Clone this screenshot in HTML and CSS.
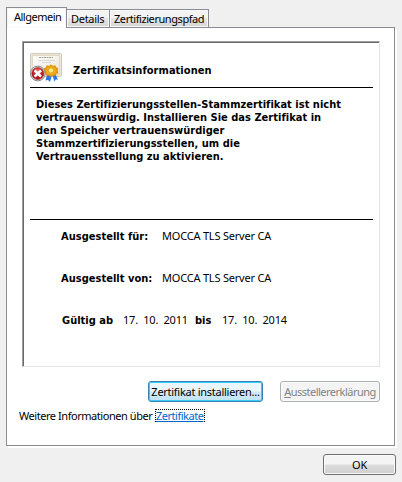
FILE: index.html
```html
<!DOCTYPE html>
<html lang="de">
<head>
<meta charset="utf-8">
<title>Zertifikat</title>
<link rel="stylesheet" href="styles.css">
</head>
<body>
<main class="dialog">
  <nav class="tabs">
    <div class="tab active">Allgemein</div>
    <div class="tab">Details</div>
    <div class="tab path">Zertifizierungspfad</div>
  </nav>
  <section class="sheet">
    <article class="certificate">
      <header class="heading">
        <svg class="cert-icon" width="33" height="30" viewBox="0 0 33 30">
          <defs>
            <linearGradient id="paper" x2="1" y2="1"><stop stop-color="#fffefa"/><stop offset="1" stop-color="#e8e5da"/></linearGradient>
            <radialGradient id="red" cy=".3"><stop stop-color="#f26b64"/><stop offset="1" stop-color="#b3171c"/></radialGradient>
            <radialGradient id="gold"><stop stop-color="#ffe36a"/><stop offset=".45" stop-color="#f5b51c"/><stop offset="1" stop-color="#dc8a08"/></radialGradient>
          </defs>
          <rect x=".5" y=".5" width="31" height="23" rx="1" fill="#ebe6d6" stroke="#d0cbbb"/>
          <rect x="2.500" y="2.500" width="27" height="19" fill="url(#paper)" stroke="#dfd9c5"/>
          <path d="M9 4.500h14" stroke="#aaa794" stroke-dasharray="2 .5"/>
          <path d="M8 7.500h17M12 9.500h9" stroke="#d5d8dd"/>
          <path d="M17.500 20l-2 7.500 2.500-.6 2 2.100 2.200-8zM22 21l2.500 7.500 1.500-2.200 2 .7-3-7z" fill="#2877e8"/>
          <path d="M21 11.500l2 1.200 2.200-.4 1 2 2 1.200-.5 2.200.5 2.200-2 1.100-1 2-2.200-.4-2 1.300-2-1.300-2.200.4-1-2-1.900-1.100.5-2.200-.5-2.200 1.900-1.200 1-2 2.200.4z" fill="url(#gold)"/>
          <circle cx="21" cy="17.500" r="2.700" fill="#ffe784" stroke="#dca01c"/>
          <circle cx="7.800" cy="20.500" r="7.400" fill="#e2e2e0" stroke="#85898c"/>
          <circle cx="7.800" cy="20.500" r="6" fill="url(#red)" stroke="#9a2023" stroke-width=".6"/>
          <path d="M4.600 17.300l6.400 6.400M11 17.300l-6.400 6.400" stroke="#fff" stroke-width="2.600"/>
        </svg>
        <h1 class="b title">Zertifikatsinformationen</h1>
      </header>
      <div class="message b">
        <div>Dieses Zertifizierungsstellen-Stammzertifikat ist nicht</div>
        <div>vertrauenswürdig. Installieren Sie das Zertifikat in</div>
        <div>den Speicher vertrauenswürdiger</div>
        <div>Stammzertifizierungsstellen, um die</div>
        <div>Vertrauensstellung zu aktivieren.</div>
      </div>
      <div class="facts">
        <div class="fact"><b class="b label">Ausgestellt für:</b><span class="name">MOCCA TLS Server CA</span></div>
        <div class="fact"><b class="b label">Ausgestellt von:</b><span class="name">MOCCA TLS Server CA</span></div>
        <div class="fact valid"><b class="b from">Gültig ab</b><span class="date">17.&nbsp; 10.&nbsp; 2011</span><b class="b until">bis</b><span class="date">17.&nbsp; 10.&nbsp; 2014</span></div>
      </div>
    </article>
    <div class="actions">
      <button class="button install">Zertifikat installieren...</button>
      <button class="button statement" disabled><u>A</u>usstellererklärung</button>
    </div>
    <p class="more"><span class="more-text">Weitere Informationen über</span><a class="link" href="#">Zertifikate</a></p>
  </section>
  <footer class="footer"><button class="button ok">OK</button></footer>
</main>
</body>
</html>
```
FILE: styles.css
```css
* { box-sizing: border-box; }
body {
  margin: 0;
  background: #f0f0f0;
  color: #000;
  font: 11px/13px "Noto Sans", sans-serif;
  letter-spacing: -.2px;
  white-space: nowrap;
}
.dialog { width: 402px; height: 482px; padding: 7px 6px 0; overflow: hidden; }
.b { font-family: "DejaVu Sans Condensed", "DejaVu Sans", sans-serif; font-stretch: condensed; font-weight: bold; font-size: 11px; letter-spacing: .02px; }
.tabs { display: flex; align-items: flex-end; height: 21px; position: relative; z-index: 1; }
.tab {
  height: 19px;
  width: 43px;
  padding: 2px 0 0 4px;
  border: 1px solid #898c95;
  border-left: 0;
  background: linear-gradient(#f3f3f3 0 45%, #e5e5e5 50%, #d5d5d5);
  box-shadow: inset 0 0 0 1px #f8f8f8;
  letter-spacing: -.3px;
}
.tab.active { height: 21px; width: 61px; padding: 2px 0 0 7px; border-left: 1px solid #898c95; border-bottom: 0; background: #fff; letter-spacing: -.6px; letter-spacing: -.5px; }
.tab.path { width: 100px; border-left: 1px solid #898c95; margin-left: -1px; padding-left: 4px; letter-spacing: -.43px; }
.sheet {
  height: 419px;
  width: 389px;
  margin-top: -1px;
  padding: 13px 14px 0 15px;
  border: 1px solid #898c95;
  background: #fff;
  box-shadow: 2px 2px 0 #fff;
}
.certificate {
  width: 358px;
  height: 326px;
  border: 1px solid;
  border-color: #a0a0a0 #e3e3e3 #e3e3e3 #a0a0a0;
  box-shadow: inset 1px 1px 0 #696969;
  padding: 0 6px 0 7px;
}
.heading { height: 46px; border-bottom: 1px solid #000; display: flex; padding-top: 11px; }
.title { margin: 11px 0 0 10px; line-height: 13px; letter-spacing: .04px; }
.message { height: 132px; padding: 10px 0 0 6px; border-bottom: 1px solid #000; }
.facts { padding: 10px 0 0 31px; }
.fact { display: flex; height: 42px; }
.label { width: 101px; }
.name, .date { margin-top: -1px; }
.valid { padding-left: 1px; }
.from { width: 61px; }
.until { width: 27px; }
.date { width: 72px; }
.actions { display: flex; justify-content: space-between; margin: 14px 0 0 126px; width: 232px; }
.button {
  height: 21px;
  padding: 0;
  border: 1px solid #707070;
  border-radius: 3px;
  background: linear-gradient(#f4f4f4 0 48%, #dddddd 52%, #cfcfcf);
  box-shadow: inset 0 0 0 1px #fafafa;
  color: #000;
  font: inherit;
  letter-spacing: inherit;
  white-space: nowrap;
}
.install { width: 115px; border-color: #3c7fb1; background: linear-gradient(#eaf6fd 0 48%, #d1eaf7 52%, #c0e4f6); box-shadow: inset 0 0 0 1px #36cdf7; letter-spacing: -.27px; }
.statement { width: 100px; border-color: #adb2b5; background: #f4f4f4; color: #838383; letter-spacing: -.52px; }
.more { display: flex; margin: 7px 0 0 -3px; }
.more-text { width: 136px; letter-spacing: -.45px; }
.link { width: 50px; height: 13px; color: #0066cc; text-decoration: underline; text-decoration-thickness: 1px; border: 1px dotted #000; line-height: 11px; letter-spacing: -.48px; }
.footer { display: flex; justify-content: flex-end; padding-top: 8px; }
.ok { width: 73px; }
```
